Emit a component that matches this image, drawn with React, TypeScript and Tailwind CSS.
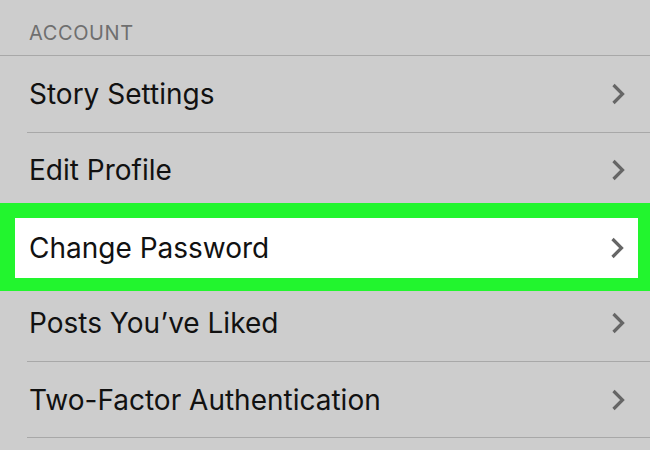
const rows = [
  "Story Settings",
  "Edit Profile",
  "Change Password",
  "Posts You\u2019ve Liked",
  "Two-Factor Authentication",
];

function Chevron() {
  return (
    <svg width="14" height="22" viewBox="0 0 14 22" fill="none" className="shrink-0">
      <path d="M2.5 2 L11.5 11 L2.5 20" stroke="#666666" strokeWidth="3.2" />
    </svg>
  );
}

export default function App() {
  return (
    <div
      className="w-[650px] h-[450px] overflow-hidden bg-[#cdcdcd] text-[#111111]"
      style={{ fontFamily: "Inter, 'Liberation Sans', sans-serif" }}
    >
      <div className="h-[56px] border-b border-[#a8a8a8] pl-[29px] flex items-center">
        <span className="text-[20px] tracking-[0.6px] text-[#6f6f6f] pt-[10px]">ACCOUNT</span>
      </div>

      {rows.map((label) =>
        label === "Change Password" ? (
          <div
            key={label}
            className="relative z-10 -mt-[6px] -mb-[6px] bg-[#22f52e] pt-[15px] pb-[13px] pl-[15px] pr-[12px]"
          >
            <div className="h-[60px] bg-white flex items-center justify-between pl-[14px] pr-[14px]">
              <span className="text-[28px] leading-none">{label}</span>
              <Chevron />
            </div>
          </div>
        ) : (
          <div key={label} className="pl-[27px]">
            <div className="h-[76.6px] border-b border-[#a8a8a8] flex items-center justify-between pl-[2px] pr-[25px]">
              <span className="text-[28px] leading-none">{label}</span>
              <Chevron />
            </div>
          </div>
        )
      )}
    </div>
  );
}
